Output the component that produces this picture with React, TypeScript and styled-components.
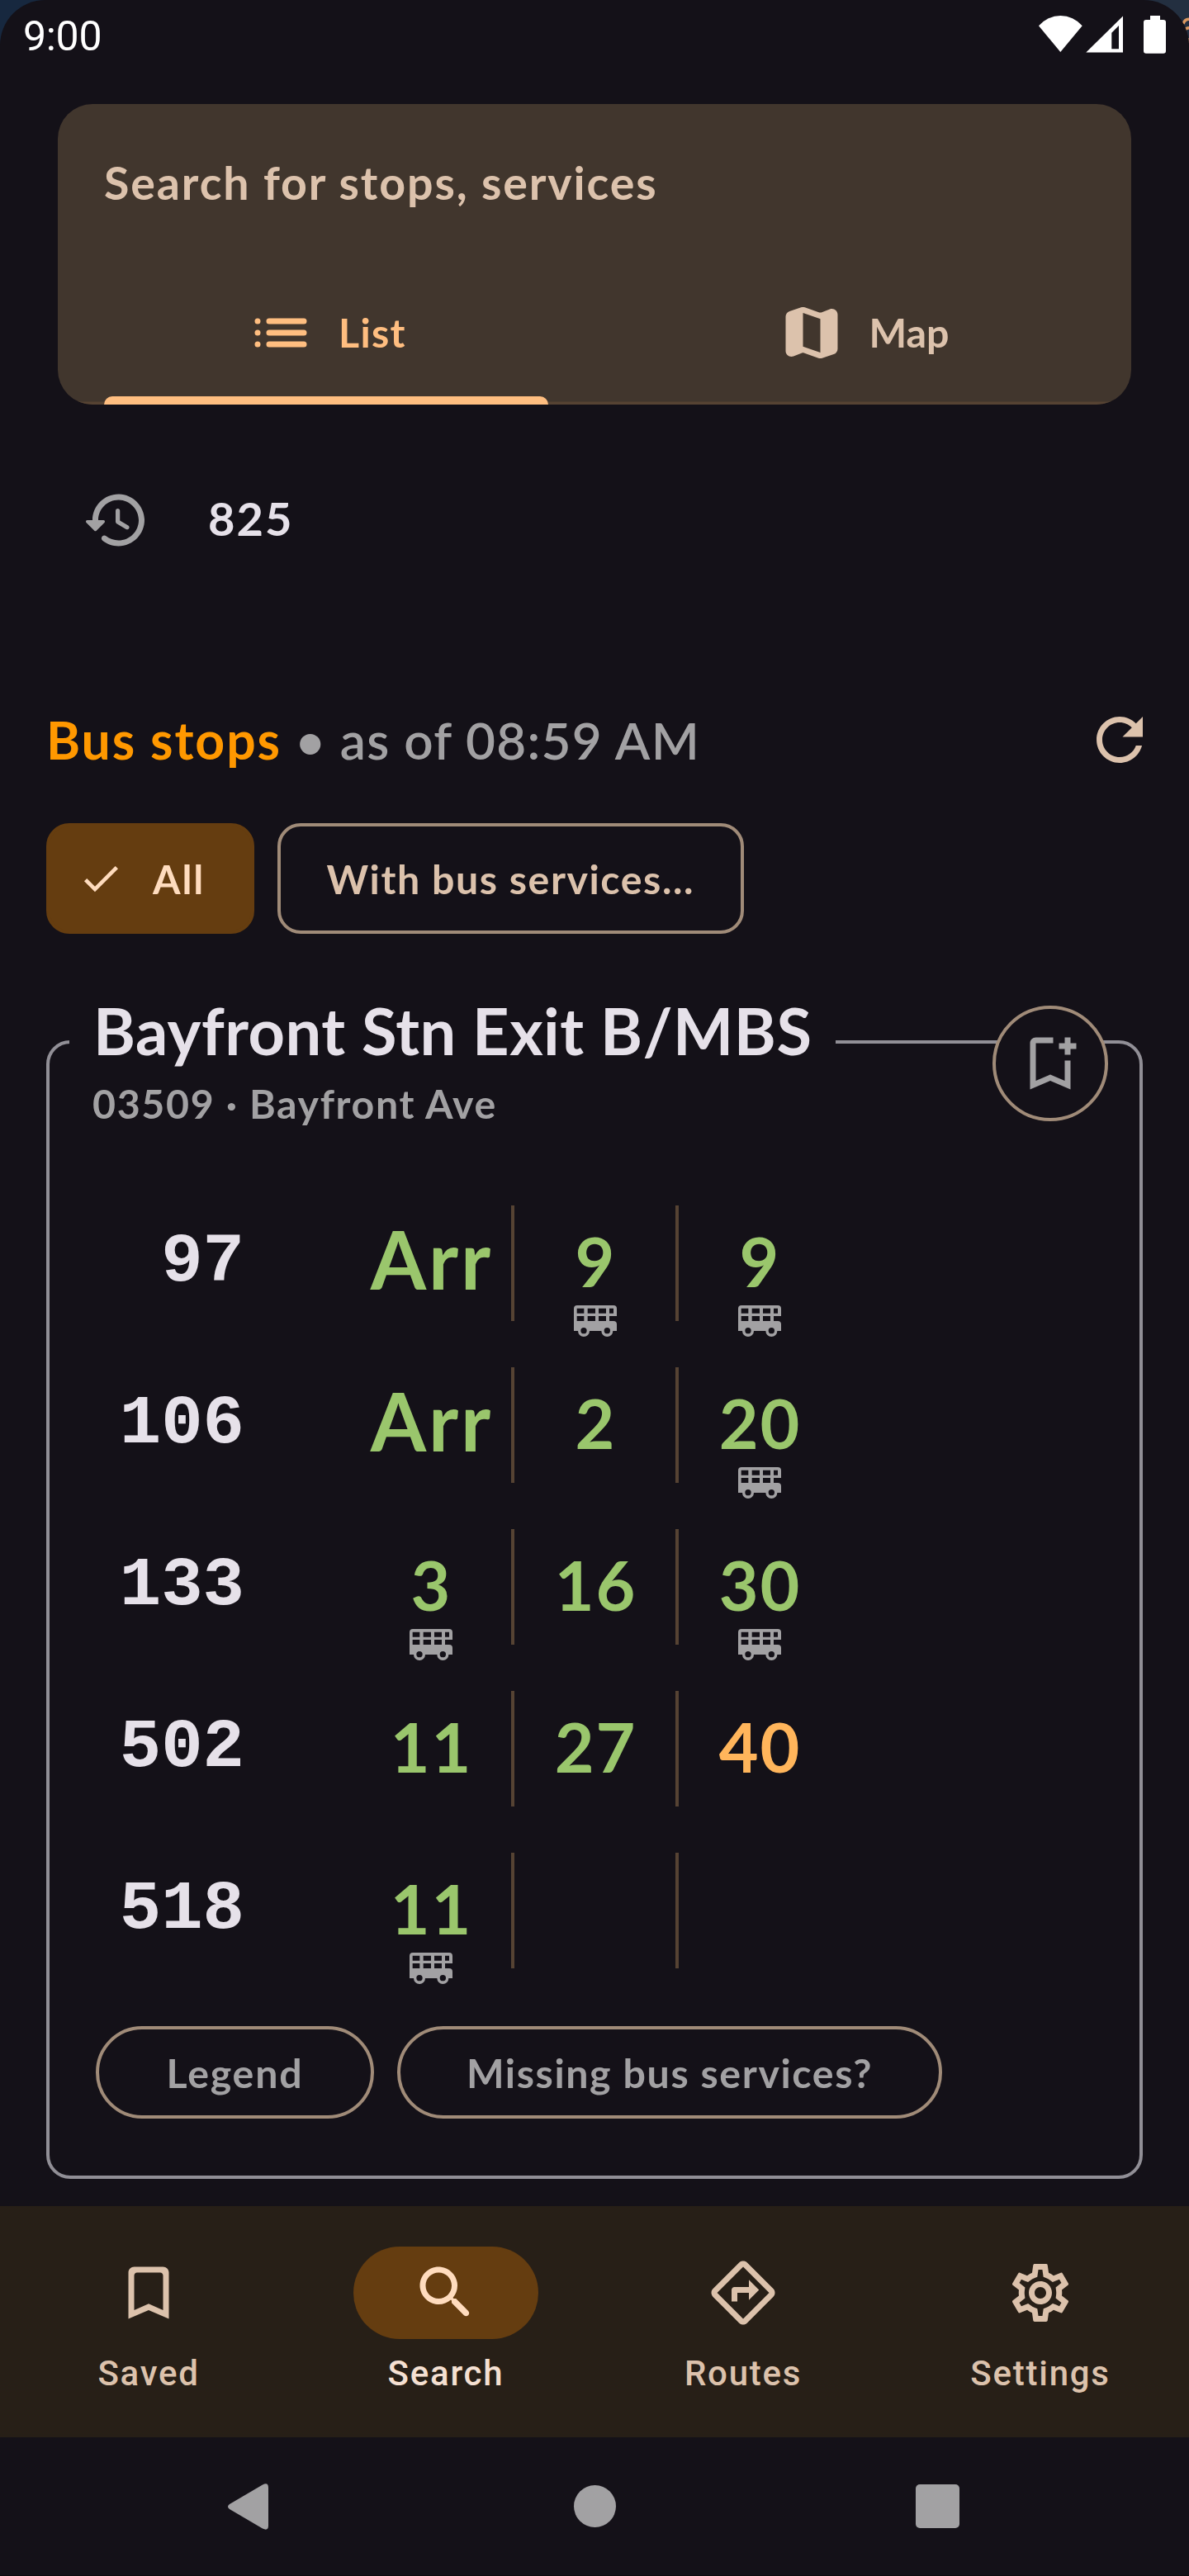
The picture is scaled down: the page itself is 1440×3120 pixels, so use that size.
import React from "react";
import styled, { createGlobalStyle } from "styled-components";

const c = {
  bg: "#141118",
  surface: "#41362d",
  nav: "#271f17",
  pill: "#653d10",
  accent: "#ffbe80",
  onPill: "#ffdcbe",
  variant: "#dcc2ac",
  outline: "#a08b78",
  divider: "#564333",
  text: "#e6e1e9",
  muted: "#a2a1a3",
  frame: "#918f96",
  green: "#9ac66c",
  amber: "#ffb55b",
};

const GlobalStyle = createGlobalStyle`
  *, *::before, *::after { box-sizing: border-box; }
  body { margin: 0; background: ${c.bg}; }
`;

const Root = styled.div`
  position: relative;
  width: 1440px;
  height: 3120px;
  overflow: hidden;
  font-family: Lato, "Open Sans", sans-serif;
  background: linear-gradient(90deg, #17283f 50%, #232f40 50%);
`;

const Squiggle = styled.svg`
  position: absolute;
  top: 0;
  right: 0;
`;

const Screen = styled.div`
  position: relative;
  display: flex;
  flex-direction: column;
  height: 3120px;
  background: ${c.bg};
  border-radius: 55px 55px 0 0;
`;

const StatusBar = styled.header`
  display: flex;
  align-items: flex-start;
  justify-content: space-between;
  height: 126px;
  padding: 0 28px;
`;

const Clock = styled.span`
  font: 400 50px/60px Roboto, sans-serif;
  letter-spacing: -0.3px;
  color: #fff;
  margin-top: 14px;
`;

const StatusIcons = styled.div`
  display: flex;
  margin-top: 19px;
`;

const SearchCard = styled.section`
  margin: 0 70px;
  height: 364px;
  border-radius: 42px;
  overflow: hidden;
  background: ${c.surface};
`;

interface TextProps {
  $size: number;
  $line: number;
  $weight?: number;
  $spacing?: number;
  $color?: string;
}

const Text = styled.span<TextProps>`
  font-size: ${(p) => p.$size}px;
  line-height: ${(p) => p.$line}px;
  font-weight: ${(p) => p.$weight ?? 700};
  letter-spacing: ${(p) => p.$spacing ?? 0}px;
  color: ${(p) => p.$color ?? "inherit"};
  white-space: pre;
`;

const SearchField = styled.div`
  height: 190px;
  padding: 45px 56px 0;
`;

const Tabs = styled.nav`
  display: grid;
  grid-template-columns: 1fr 1fr;
  height: 174px;
  box-shadow: inset 0 -3.5px ${c.divider};
`;

const Tab = styled.div<{ $active?: boolean }>`
  position: relative;
  display: flex;
  align-items: center;
  justify-content: center;
  gap: 28px;
  color: ${(p) => (p.$active ? c.accent : c.variant)};
  span { padding-bottom: 2px; }
  &::after {
    content: "";
    display: ${(p) => (p.$active ? "block" : "none")};
    position: absolute;
    left: 56px;
    right: 56px;
    bottom: 0;
    height: 10.5px;
    border-radius: 10.5px 10.5px 0 0;
    background: ${c.accent};
  }
`;

const HistoryRow = styled.div`
  display: flex;
  align-items: center;
  gap: 70px;
  height: 84px;
  margin-top: 98px;
  padding: 0 0 0 98px;
  color: ${c.muted};
  span { padding-bottom: 5px; }
`;

const HeadingRow = styled.div`
  display: flex;
  align-items: center;
  justify-content: space-between;
  height: 84px;
  margin-top: 182px;
  padding: 0 42px 0 56px;
  color: ${c.variant};
`;

const Chips = styled.div`
  display: flex;
  gap: 28px;
  height: 134px;
  margin-top: 59px;
  padding-left: 56px;
`;

const Chip = styled.div<{ $selected?: boolean; $width: number }>`
  display: flex;
  align-items: center;
  justify-content: ${(p) => (p.$selected ? "flex-start" : "center")};
  gap: 35px;
  width: ${(p) => p.$width}px;
  padding-left: ${(p) => (p.$selected ? 34 : 0)}px;
  border-radius: 28px;
  border: 4px solid ${(p) => (p.$selected ? c.pill : c.outline)};
  background: ${(p) => (p.$selected ? c.pill : "transparent")};
  color: ${(p) => (p.$selected ? c.onPill : c.variant)};
`;

const StopCard = styled.section`
  position: relative;
  display: flex;
  flex-direction: column;
  align-items: flex-start;
  height: 1379px;
  margin: 129px 56px 0;
  border: 4px solid ${c.frame};
  border-radius: 29px;
`;

const StopTitle = styled.h2`
  display: flex;
  width: 928px;
  height: 100px;
  margin: -65px 0 0 24px;
  padding: 0 0 0 29px;
  color: ${c.text};
  background: ${c.bg};
`;

const StopSub = styled.div`
  height: 70px;
  margin: 2px 0 0 52px;
  color: ${c.muted};
`;

const SaveButton = styled.button`
  position: absolute;
  top: -46px;
  right: 38px;
  display: grid;
  place-items: center;
  width: 140px;
  height: 140px;
  padding: 0;
  border: 4px solid ${c.outline};
  border-radius: 50%;
  background: ${c.bg};
  color: ${c.muted};
`;

const Services = styled.div`
  margin-top: 89px;
`;

const ServiceRow = styled.div`
  display: grid;
  grid-template-columns: 364px 199px 199px 199px;
  height: 196px;
`;

const ServiceNo = styled.div`
  padding-right: 128px;
  text-align: right;
  font: 700 84px/137px "Liberation Mono", monospace;
  color: ${c.text};
`;

const ArrivalCell = styled.div`
  display: flex;
  flex-direction: column;
  align-items: center;
  height: 140px;
  padding-top: 11px;
  border-right: 4px solid ${c.divider};
  color: ${c.muted};
  &:last-child { border-right-color: transparent; }
  svg { flex: none; }
`;

const Minutes = styled(Text)`
  height: 110px;
  padding-left: ${(p) => p.$spacing ?? 0}px;
`;

const CardActions = styled.div`
  display: flex;
  gap: 28px;
  margin: 14px 0 0 56px;
`;

const PillButton = styled.button<{ $width: number }>`
  width: ${(p) => p.$width}px;
  height: 112px;
  padding: 0;
  border: 4px solid ${c.outline};
  border-radius: 56px;
  background: none;
  color: ${c.muted};
  font-family: inherit;
`;

const BottomNav = styled.nav`
  display: grid;
  grid-template-columns: repeat(4, 1fr);
  height: 280px;
  margin-top: 33px;
  background: ${c.nav};
`;

const NavItem = styled.div<{ $active?: boolean }>`
  display: flex;
  flex-direction: column;
  align-items: center;
  gap: 14px;
  padding-top: 49px;
  color: ${c.variant};
  font: 500 42px/56px Roboto, sans-serif;
  letter-spacing: 1.75px;
  span { color: ${(p) => (p.$active ? "#f5e0d2" : c.variant)}; }
`;

const NavPill = styled.div<{ $active?: boolean }>`
  display: grid;
  place-items: center;
  width: 224px;
  height: 112px;
  border-radius: 56px;
  background: ${(p) => (p.$active ? c.pill : "transparent")};
  color: ${(p) => (p.$active ? c.onPill : c.variant)};
`;

const SystemBar = styled.div`
  display: flex;
  align-items: center;
  height: 168px;
  padding-left: 276px;
  border-bottom: 1px solid #0c0a0e;
`;

const HomeDot = styled.div`
  width: 51px;
  height: 51px;
  margin: 0 363px 0 370px;
  border-radius: 50%;
  background: ${c.muted};
`;

const RecentsSquare = styled.div`
  width: 53px;
  height: 53px;
  border-radius: 5px;
  background: ${c.muted};
`;

const paths = {
  map: "M14.65 4.98l-5-1.75c-.42-.15-.88-.15-1.3-.01L4.36 4.56C3.55 4.84 3 5.6 3 6.46v11.85c0 1.41 1.41 2.37 2.72 1.86l2.93-1.14c.22-.09.47-.09.69-.01l5 1.75c.42.15.88.15 1.3.01l3.99-1.34c.81-.27 1.36-1.04 1.36-1.9V5.69c0-1.41-1.41-2.37-2.72-1.86l-2.93 1.14c-.22.08-.46.09-.69.01zM15 18.89l-6-2.11V5.11l6 2.11v11.67z",
  list: "M4 7a1 1 0 100 2 1 1 0 000-2zM4 11a1 1 0 100 2 1 1 0 000-2zM4 15a1 1 0 100 2 1 1 0 000-2zM8 7h12a1 1 0 010 2H8a1 1 0 010-2zM8 11h12a1 1 0 010 2H8a1 1 0 010-2zM8 15h12a1 1 0 010 2H8a1 1 0 010-2z",
  history:
    "M13.26 3C8.17 2.86 4 6.95 4 12H2.21c-.45 0-.67.54-.35.85l2.79 2.8c.2.2.51.2.71 0l2.79-2.8c.31-.31.09-.85-.36-.85H6c0-3.9 3.18-7.05 7.1-7 3.72.05 6.85 3.18 6.9 6.9.05 3.91-3.1 7.1-7 7.1-1.61 0-3.1-.55-4.28-1.48-.4-.31-.96-.28-1.32.08-.42.43-.39 1.13.08 1.5C9 20.29 10.91 21 13 21c5.05 0 9.14-4.17 9-9.26-.13-4.69-4.05-8.61-8.74-8.74zm-.51 5c-.41 0-.75.34-.75.75v3.68c0 .35.19.68.49.86l3.12 1.85c.36.21.82.09 1.03-.26.21-.36.09-.82-.26-1.03l-2.88-1.71v-3.4c0-.4-.34-.74-.75-.74z",
  refresh:
    "M17.65 6.35C16.2 4.9 14.21 4 12 4c-4.42 0-7.99 3.58-7.99 8s3.57 8 7.99 8c3.73 0 6.84-2.55 7.73-6h-2.08c-.82 2.33-3.04 4-5.65 4-3.31 0-6-2.69-6-6s2.69-6 6-6c1.66 0 3.14.69 4.22 1.78L13 11h7V4l-2.35 2.35z",
  check: "M9 16.17L4.83 12l-1.42 1.41L9 19 21 7l-1.41-1.41z",
  bookmarkAdd:
    "M17 11v6.97l-5-2.14-5 2.14V5h6V3H7c-1.1 0-2 .9-2 2v16l7-3 7 3V11h-2zm4-4h-2v2h-2V7h-2V5h2V3h2v2h2v2z",
  bookmark:
    "M17 3H7c-1.1 0-2 .9-2 2v16l7-3 7 3V5c0-1.1-.9-2-2-2zm0 15l-5-2.18L7 18V6c0-.55.45-1 1-1h8c.55 0 1 .45 1 1v12z",
  search:
    "M15.5 14h-.79l-.28-.27c1.2-1.4 1.82-3.31 1.48-5.34-.47-2.78-2.79-5-5.59-5.34-4.23-.52-7.79 3.04-7.27 7.27.34 2.8 2.56 5.12 5.34 5.59 2.03.34 3.94-.28 5.34-1.48l.27.28v.79l4.25 4.25c.41.41 1.08.41 1.49 0 .41-.41.41-1.08 0-1.49L15.5 14zm-6 0C7.01 14 5 11.99 5 9.5S7.01 5 9.5 5 14 7.01 14 9.5 11.99 14 9.5 14z",
  directions:
    "M22.43 10.59l-9.01-9.01c-.75-.75-2.07-.76-2.83 0l-9 9c-.78.78-.78 2.04 0 2.82l9 9c.39.39.9.58 1.41.58.51 0 1.02-.19 1.41-.58l8.99-8.99c.79-.76.8-2.02.03-2.82zm-10.42 10.4l-9-9 9-9 9 9-9 9zM8 11v4h2v-3h4v2.5l3.5-3.5L14 7.5V10H9c-.55 0-1 .45-1 1z",
  settings:
    "M19.43 12.98c.04-.32.07-.64.07-.98 0-.34-.03-.66-.07-.98l2.11-1.65c.19-.15.24-.42.12-.64l-2-3.46a.5.5 0 00-.61-.22l-2.49 1c-.52-.4-1.08-.73-1.69-.98l-.38-2.65A.488.488 0 0014 2h-4c-.25 0-.46.18-.49.42l-.38 2.65c-.61.25-1.17.59-1.69.98l-2.49-1a.566.566 0 00-.18-.03c-.17 0-.34.09-.43.25l-2 3.46c-.13.22-.07.49.12.64l2.11 1.65c-.04.32-.07.65-.07.98 0 .33.03.66.07.98l-2.11 1.65c-.19.15-.24.42-.12.64l2 3.46a.5.5 0 00.61.22l2.49-1c.52.4 1.08.73 1.69.98l.38 2.65c.03.24.24.42.49.42h4c.25 0 .46-.18.49-.42l.38-2.65c.61-.25 1.17-.59 1.69-.98l2.49 1c.06.02.12.03.18.03.17 0 .34-.09.43-.25l2-3.46c.12-.22.07-.49-.12-.64l-2.11-1.65zm-1.98-1.71c.04.31.05.52.05.73 0 .21-.02.43-.05.73l-.14 1.13.89.7 1.08.84-.7 1.21-1.27-.51-1.04-.42-.9.68c-.43.32-.84.56-1.25.73l-1.06.43-.16 1.13-.2 1.35h-1.4l-.19-1.35-.16-1.13-1.06-.43c-.43-.18-.83-.41-1.23-.71l-.91-.7-1.06.43-1.27.51-.7-1.21 1.08-.84.89-.7-.14-1.13c-.03-.31-.05-.54-.05-.74s.02-.43.05-.73l.14-1.13-.89-.7-1.08-.84.7-1.21 1.27.51 1.04.42.9-.68c.43-.32.84-.56 1.25-.73l1.06-.43.16-1.13.2-1.35h1.39l.19 1.35.16 1.13 1.06.43c.43.18.83.41 1.23.71l.91.7 1.06-.43 1.27-.51.7 1.21-1.07.85-.89.7.14 1.13zM12 8c-2.21 0-4 1.79-4 4s1.79 4 4 4 4-1.79 4-4-1.79-4-4-4zm0 6c-1.1 0-2-.9-2-2s.9-2 2-2 2 .9 2 2-.9 2-2 2z",
};

const Icon = ({ name, size = 84 }: { name: keyof typeof paths; size?: number }) => (
  <svg width={size} height={size} viewBox="0 0 24 24" fill="currentColor">
    <path d={paths[name]} />
  </svg>
);

const DoubleDecker = () => (
  <svg width="52" height="38" viewBox="0 0 156 114">
    <path
      fill="currentColor"
      fillRule="evenodd"
      d="M12 0H144Q156 0 156 12V39H129V57H144Q156 57 156 69V93H142A21 21 0 0 1 100 93H57A21 21 0 0 1 15 93H0V12Q0 0 12 0ZM11 11V29H37V11ZM50 11V29H78V11ZM90 11V29H117V11ZM129 11V29H144V11ZM11 39V57H37V39ZM50 39V57H78V39ZM90 39V57H117V39ZM36 81A11 11 0 1 0 36 103A11 11 0 1 0 36 81ZM121 81A11 11 0 1 0 121 103A11 11 0 1 0 121 81Z"
    />
  </svg>
);

interface Arrival {
  time: string;
  deck?: boolean;
  busy?: boolean;
}

const services: { no: string; arrivals: Arrival[] }[] = [
  { no: "97", arrivals: [{ time: "Arr" }, { time: "9", deck: true }, { time: "9", deck: true }] },
  { no: "106", arrivals: [{ time: "Arr" }, { time: "2" }, { time: "20", deck: true }] },
  { no: "133", arrivals: [{ time: "3", deck: true }, { time: "16" }, { time: "30", deck: true }] },
  { no: "502", arrivals: [{ time: "11" }, { time: "27" }, { time: "40", busy: true }] },
  { no: "518", arrivals: [{ time: "11", deck: true }, { time: "" }, { time: "" }] },
];

const navItems: { label: string; icon: keyof typeof paths; active?: boolean }[] = [
  { label: "Saved", icon: "bookmark" },
  { label: "Search", icon: "search", active: true },
  { label: "Routes", icon: "directions" },
  { label: "Settings", icon: "settings" },
];

export default function App() {
  return (
    <>
      <GlobalStyle />
      <Root>
        <Squiggle width="20" height="60" viewBox="0 0 20 60" fill="none" stroke="#dc9860" strokeWidth="3.4">
          <path d="M13 29Q15 22 22 23.5M14 37Q17 33 22 34M18 46V52" />
        </Squiggle>
        <Screen>
          <StatusBar>
            <Clock>9:00</Clock>
            <StatusIcons>
              <svg width="154" height="46" viewBox="0 0 154 46" fill="#fff">
                <path d="M26.3 44L0 12.3A34.4 34.4 0 0 1 52.7 12.3Z" />
                <path fillRule="evenodd" d="M57.3 44.5H102V0.5ZM88.3 40.3V20.7L97 12V40.3Z" />
                <rect x="127" y="5" width="27" height="40.7" rx="3" />
                <rect x="135" y="0" width="12" height="7" />
              </svg>
            </StatusIcons>
          </StatusBar>

          <SearchCard>
            <SearchField>
              <Text as="div" $size={55.5} $line={100} $spacing={1.9} $color={c.variant}>
                Search for stops, services
              </Text>
            </SearchField>
            <Tabs>
              <Tab $active>
                <Icon name="list" />
                <Text $size={48.3} $line={70} $spacing={1.3}>List</Text>
              </Tab>
              <Tab>
                <Icon name="map" />
                <Text $size={48.3} $line={70}>Map</Text>
              </Tab>
            </Tabs>
          </SearchCard>

          <HistoryRow>
            <Icon name="history" />
            <Text $size={56} $line={80} $color={c.text} $spacing={2}>825</Text>
          </HistoryRow>

          <HeadingRow>
            <div>
              <Text $size={62.5} $line={84} $spacing={1.9} $color="#ff9800">Bus stops</Text>
              <Text $size={62} $line={84} $spacing={1.3} $weight={600} $color={c.muted}>{" • as of 08:59 AM"}</Text>
            </div>
            <Icon name="refresh" />
          </HeadingRow>

          <Chips>
            <Chip $selected $width={251.5}>
              <Icon name="check" size={56} />
              <Text $size={48.3} $line={70} $spacing={1.9}>All</Text>
            </Chip>
            <Chip $width={565.5}>
              <Text $size={48.3} $line={70} $spacing={1.55}>With bus services...</Text>
            </Chip>
          </Chips>

          <StopCard>
            <StopTitle>
              <Text $size={77.5} $line={100} $spacing={0.5}>Bayfront Stn Exit B/MBS</Text>
            </StopTitle>
            <StopSub>
              <Text $size={48.3} $line={70} $spacing={1.65}>03509 · Bayfront Ave</Text>
            </StopSub>
            <SaveButton>
              <Icon name="bookmarkAdd" />
            </SaveButton>
            <Services>
              {services.map((s) => (
                <ServiceRow key={s.no}>
                  <ServiceNo>{s.no}</ServiceNo>
                  {s.arrivals.map((a, i) => (
                    <ArrivalCell key={i}>
                      {a.time && (
                        <Minutes
                          $size={a.time === "Arr" ? 97 : 82.5}
                          $line={a.time === "Arr" ? 108 : 113}
                          $spacing={a.time === "Arr" ? 3 : 2}
                          $color={a.busy ? c.amber : c.green}
                        >
                          {a.time}
                        </Minutes>
                      )}
                      {a.deck && <DoubleDecker />}
                    </ArrivalCell>
                  ))}
                </ServiceRow>
              ))}
            </Services>
            <CardActions>
              <PillButton $width={337}>
                <Text $size={48.3} $line={70} $spacing={1.8}>Legend</Text>
              </PillButton>
              <PillButton $width={660}>
                <Text $size={48.3} $line={70} $spacing={1.6}>Missing bus services?</Text>
              </PillButton>
            </CardActions>
          </StopCard>

          <BottomNav>
            {navItems.map((n) => (
              <NavItem key={n.label} $active={n.active}>
                <NavPill $active={n.active}>
                  <Icon name={n.icon} />
                </NavPill>
                <span>{n.label}</span>
              </NavItem>
            ))}
          </BottomNav>

          <SystemBar>
            <svg width="49" height="56" viewBox="0 0 49 56">
              <path d="M2 25L42 1.5Q49 -2 49 5V51Q49 58 42 54.5L2 31Q-2 28 2 25Z" fill={c.muted} />
            </svg>
            <HomeDot />
            <RecentsSquare />
          </SystemBar>
        </Screen>
      </Root>
    </>
  );
}
